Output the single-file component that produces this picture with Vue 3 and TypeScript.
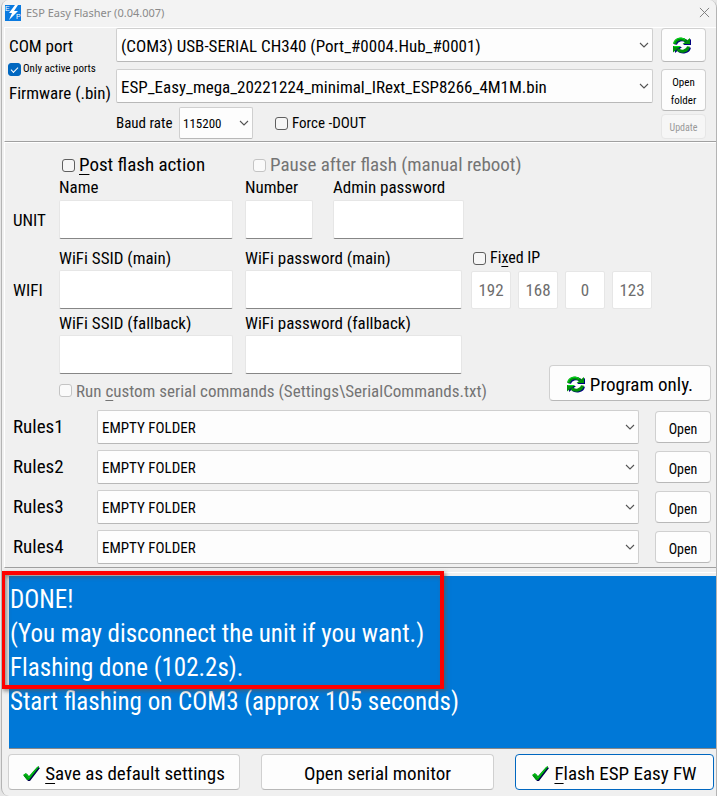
<script setup lang="ts">
import { ref } from 'vue'

const activeOnly = ref(true)
const forceDout = ref(false)
const postFlash = ref(false)
const fixedIp = ref(false)
const ip = ref<string[]>(['192', '168', '0', '123'])
const rules: string[] = ['Rules1', 'Rules2', 'Rules3', 'Rules4']
const log = ref<string>(
  ['DONE!', '(You may disconnect the unit if you want.)', 'Flashing done (102.2s).', 'Start flashing on COM3 (approx 105 seconds)'].join('\n'),
)
</script>

<template>
  <main class="window">
    <svg class="defs" aria-hidden="true">
      <symbol id="chevron" viewBox="0 0 10 6">
        <path d="M1 1l4 4 4-4" fill="none" stroke="#555" stroke-width="1.1" />
      </symbol>
      <symbol id="refresh" viewBox="0 0 18 17">
        <g fill="none" stroke="#000080" stroke-width="3">
          <path d="M2.500 7.500C3.500 2.500 10 1.500 13.500 4.500" />
          <path d="M16.500 10.500C15.500 15.500 9 16 5.500 13.500" />
        </g>
        <path d="M18 2v6h-8zM2 16v-6h7z" fill="#000080" />
        <g fill="none" stroke="#00900a" stroke-width="3">
          <path d="M1.500 7C2.500 1.500 9.500 0.500 13 4" />
          <path d="M15.500 9.500C14.500 14.500 8 15.500 4.500 12.500" />
        </g>
        <path d="M17 1v6H9.500zM0 15.500V9h8z" fill="#00900a" />
        <path d="M1 6C2.500 1 8 0 12 2.500M1 9.500h6" fill="none" stroke="#00e01c" />
      </symbol>
      <symbol id="tick" viewBox="0 0 17 16">
        <path d="M1 10l3-2 2 3 9-10 2 1L7 15H5z" fill="#000050" />
        <path d="M0 9l3-2 3 3 8-9 2-1v1L6 14H4z" fill="#009a10" />
        <path d="M1 9l2-1 3 4 9-11" fill="none" stroke="#00c814" />
      </symbol>
    </svg>

    <header class="titlebar">
      <svg class="app-icon" viewBox="0 0 16 16" aria-hidden="true">
        <rect width="16" height="16" fill="#0a7ae0" />
        <text x="0" y="6" font-size="7" fill="#fff">E</text>
        <text x="11" y="14" font-size="7" fill="#fff">P</text>
        <path d="M10 0L4 8h3l-3 7 9-9H9l4-6z" fill="#fff" />
      </svg>
      <h1>ESP Easy Flasher (0.04.007)</h1>
      <button class="close" type="button" aria-label="Close">
        <svg viewBox="0 0 12 12"><path d="M1 1l10 10M11 1L1 11" stroke="#777" stroke-width="1" /></svg>
      </button>
    </header>

    <section class="panel connection">
      <div class="labels">
        <label class="com" for="com">COM port</label>
        <label class="check small"><input v-model="activeOnly" type="checkbox" />Only active ports</label>
        <label class="firmware" for="bin">Firmware (.bin)</label>
      </div>
      <div class="choices">
        <span class="combo">
          <select id="com"><option>(COM3) USB-SERIAL CH340 (Port_#0004.Hub_#0001)</option></select>
          <svg><use href="#chevron" /></svg>
        </span>
        <span class="combo">
          <select id="bin"><option>ESP_Easy_mega_20221224_minimal_IRext_ESP8266_4M1M.bin</option></select>
          <svg><use href="#chevron" /></svg>
        </span>
        <div class="baud-row">
          <label for="baud">Baud rate</label>
          <span class="combo baud">
            <select id="baud"><option>115200</option></select>
            <svg><use href="#chevron" /></svg>
          </span>
          <label class="check"><input v-model="forceDout" type="checkbox" />Force -DOUT</label>
        </div>
      </div>
      <div class="actions">
        <button class="btn reload" type="button" aria-label="Refresh ports"><svg class="refresh"><use href="#refresh" /></svg></button>
        <button class="btn folder" type="button">Open folder</button>
        <button class="btn update" type="button" disabled>Update</button>
      </div>
    </section>

    <section class="panel settings">
      <div class="options">
        <label class="check large"><input v-model="postFlash" type="checkbox" /><span><u>P</u>ost flash action</span></label>
        <label class="check large off"><input type="checkbox" disabled />Pause after flash (manual reboot)</label>
      </div>

      <div class="group unit">
        <h2>UNIT</h2>
        <label class="field"><span>Name</span><input type="text" /></label>
        <label class="field number"><span>Number</span><input type="text" /></label>
        <label class="field admin"><span>Admin password</span><input type="password" /></label>
      </div>

      <div class="group wifi">
        <h2>WIFI</h2>
        <label class="field"><span>WiFi SSID (main)</span><input type="text" /></label>
        <label class="field wide"><span>WiFi password (main)</span><input type="password" /></label>
        <div class="ip">
          <label class="check"><input v-model="fixedIp" type="checkbox" /><span>Fi<u>x</u>ed IP</span></label>
          <div class="octets">
            <input v-for="(_, i) in ip" :key="i" v-model="ip[i]" type="text" :aria-label="`IP part ${i + 1}`" disabled />
          </div>
        </div>
      </div>

      <div class="group fallback">
        <label class="field"><span>WiFi SSID (fallback)</span><input type="text" /></label>
        <label class="field wide"><span>WiFi password (fallback)</span><input type="password" /></label>
      </div>

      <div class="program-row">
        <label class="check custom off"><input type="checkbox" disabled /><span>Run <u>c</u>ustom serial commands (Settings\SerialCommands.txt)</span></label>
        <button class="btn program" type="button"><svg class="refresh"><use href="#refresh" /></svg>Program only.</button>
      </div>

      <div class="rules">
        <div v-for="rule in rules" :key="rule" class="rule">
          <label :for="rule">{{ rule }}</label>
          <span class="combo">
            <select :id="rule"><option>EMPTY FOLDER</option></select>
            <svg><use href="#chevron" /></svg>
          </span>
          <button class="btn open" type="button">Open</button>
        </div>
      </div>
    </section>

    <section class="output">
      <textarea v-model="log" readonly aria-label="Log"></textarea>
      <div class="highlight"></div>
    </section>

    <footer class="footer">
      <button class="btn save" type="button"><svg class="tick"><use href="#tick" /></svg><span><u>S</u>ave as default settings</span></button>
      <button class="btn serial" type="button">Open serial monitor</button>
      <button class="btn flash" type="button"><svg class="tick"><use href="#tick" /></svg><span><u>F</u>lash ESP Easy FW</span></button>
    </footer>
  </main>
</template>

<style>
body {
  margin: 0;
  background: #e6e6e6;
}
</style>

<style scoped>
* {
  box-sizing: border-box;
}
.window {
  margin-left: 1px;
  border: 1px solid #b4b4b4;
  border-width: 0 1px 0 1px;
  border-radius: 8px 8px 0 8px;
  background: #f0f0f0;
  color: #000;
  font: 17px/22px 'Roboto Condensed', 'Liberation Sans', sans-serif;
  overflow: hidden;
}
.defs {
  display: none;
}
input,
select,
button,
textarea {
  margin: 0;
  font: inherit;
  color: inherit;
}
u {
  text-underline-offset: 3px;
}

.titlebar {
  display: flex;
  align-items: center;
  gap: 5px;
  height: 27px;
  padding: 0 6px 2px 3px;
  background: #f3f3f3;
}
.titlebar h1 {
  flex: 1;
  margin: 0;
  font: 11px/16px 'Noto Sans', sans-serif;
  color: #8a8a8a;
}
.app-icon {
  width: 16px;
  height: 16px;
  font-family: 'Liberation Sans', sans-serif;
}
.close {
  display: flex;
  padding: 0;
  border: 0;
  background: none;
}
.close svg {
  width: 11px;
  height: 11px;
}

.panel {
  margin-left: 2px;
  border: 1px solid #fff;
  border-right-width: 0;
  border-bottom-color: #a0a0a0;
}
.connection {
  display: flex;
  height: 115px;
}
.labels {
  display: flex;
  flex-direction: column;
  width: 111px;
  padding: 7px 0 0 4px;
}
.firmware {
  margin-top: 5px;
}
.choices {
  flex: 1;
  display: flex;
  flex-direction: column;
  gap: 7px;
}
.baud-row {
  display: flex;
  align-items: center;
  font-size: 15px;
  margin-top: -3px;
}
.baud-row > label:first-child {
  width: 63px;
}
.baud-row > .check {
  margin-left: 22px;
}
.actions {
  display: flex;
  flex-direction: column;
  width: 45px;
  margin: 0 10px 0 8px;
}

.check {
  display: flex;
  align-items: center;
  gap: 4px;
}
.check input {
  appearance: none;
  flex: none;
  width: 13px;
  height: 13px;
  border: 1px solid #5f5f5f;
  border-radius: 3px;
  background: #f6f6f6;
}
.check input:checked {
  border-color: #0067c0;
  background: #0067c0;
}
.check input:checked::before {
  content: '';
  display: block;
  width: 6px;
  height: 3px;
  margin: 3px 0 0 2px;
  border: solid #fff;
  border-width: 0 0 1px 1px;
  transform: rotate(-45deg);
}
.check input:disabled {
  border-color: #c4c4c4;
  background: #fafafa;
}
.small {
  gap: 2px;
  margin-left: -1px;
  font-size: 11px;
  line-height: 16px;
  margin-top: 4px;
}
.large {
  font-size: 19px;
}
.off {
  color: #747474;
}

.combo {
  display: grid;
  align-items: center;
  height: 34px;
}
.combo select,
.combo svg {
  grid-area: 1 / 1;
}
.combo select {
  appearance: none;
  width: 100%;
  height: 100%;
  padding: 2px 24px 0 4px;
  border: 1px solid #cfcfcf;
  border-bottom-color: #b8b8b8;
  border-radius: 2px;
  background: #fdfdfd;
}
.combo svg {
  justify-self: end;
  width: 10px;
  height: 6px;
  margin-right: 4px;
  pointer-events: none;
}
.baud {
  width: 74px;
  height: 32px;
}
.baud select {
  font-size: 13px;
  padding-left: 3px;
}

.btn {
  display: flex;
  align-items: center;
  justify-content: center;
  gap: 5px;
  padding: 3px 0 0;
  border: 1px solid #d0d0d0;
  border-bottom-color: #b8b8b8;
  border-radius: 4px;
  background: #fdfdfd;
  font-size: 19px;
}
.refresh {
  width: 18px;
  height: 17px;
}
.tick {
  width: 17px;
  height: 16px;
}
.reload {
  height: 34px;
  padding: 0 4px 0 0;
}
.folder {
  height: 42px;
  margin-top: 7px;
  font-size: 11px;
  line-height: 18px;
}
.update {
  height: 25px;
  margin-top: 3px;
  border-color: #e6e6e6;
  background: #f6f6f6;
  color: #989898;
  font-size: 10px;
}

.settings {
  padding: 11px 5px 3px 8px;
}
.options {
  display: grid;
  grid-template-columns: 191px 1fr;
  padding-left: 49px;
}
.group {
  display: flex;
  align-items: flex-end;
  padding-left: 46px;
}
.group h2 {
  width: 46px;
  margin: 0 0 0 -46px;
  font-size: 17px;
  font-weight: 400;
  line-height: 38px;
  align-self: flex-end;
}
.wifi {
  margin-top: 8px;
}
.fallback {
  margin-top: 3px;
}
.field {
  display: flex;
  flex-direction: column;
  width: 174px;
  margin-right: 12px;
}
.field input {
  width: 100%;
  height: 39px;
  margin-top: 1px;
}
.unit .field input {
  margin-top: 2px;
}
.field input,
.octets input {
  border: 1px solid #e6e6e6;
  border-bottom-color: #868686;
  border-radius: 2px;
  background: #fff;
}
.number {
  width: 68px;
  margin-right: 20px;
}
.admin {
  width: 131px;
}
.wide {
  width: 217px;
  margin-right: 9px;
}
.ip .check {
  font-size: 16px;
  padding-left: 2px;
}
.octets {
  display: flex;
  gap: 7px;
  margin-top: 2px;
}
.octets input {
  width: 40px;
  height: 38px;
  padding: 0;
  border-bottom-color: #e6e6e6;
  color: #6d6d6d;
  text-align: center;
}
.program-row {
  display: flex;
  justify-content: space-between;
  height: 27px;
  padding-left: 46px;
}
.custom {
  margin-top: 6px;
}
.program {
  width: 162px;
  height: 36px;
  margin-top: -9px;
}

.rules {
  display: grid;
  gap: 6px;
  margin-top: 9px;
}
.rule {
  display: grid;
  grid-template-columns: 68px 1fr 56px;
  column-gap: 16px;
  align-items: center;
}
.rule label {
  font-size: 19px;
}
.rule .combo {
  width: 100%;
}
.rule select {
  font-size: 15px;
}
.open {
  height: 32px;
  font-size: 14px;
}

.output {
  position: relative;
  margin-top: 4px;
  padding: 3px 0 0 7px;
  border-top: 1px solid #fff;
}
.output textarea {
  display: block;
  width: 100%;
  height: 173px;
  padding: 7px 1px;
  border: 0;
  border-bottom: 1px solid #888;
  outline: 0;
  resize: none;
  overflow: hidden;
  background: #0078d7;
  color: #fff;
  font-size: 25px;
  line-height: 34px;
}
.highlight {
  position: absolute;
  top: -2px;
  left: -1px;
  width: 443px;
  height: 118px;
  border: 4px solid #f00;
  box-shadow: 2px 2px 4px #555a, inset 2px 2px 4px #555a;
  pointer-events: none;
}

.footer {
  display: grid;
  grid-template-columns: 232fr 233fr 199fr;
  column-gap: 21px;
  padding: 5px 2px 6px 6px;
}
.footer .btn {
  height: 36px;
}
.flash {
  border-color: #0067c0;
}
</style>
